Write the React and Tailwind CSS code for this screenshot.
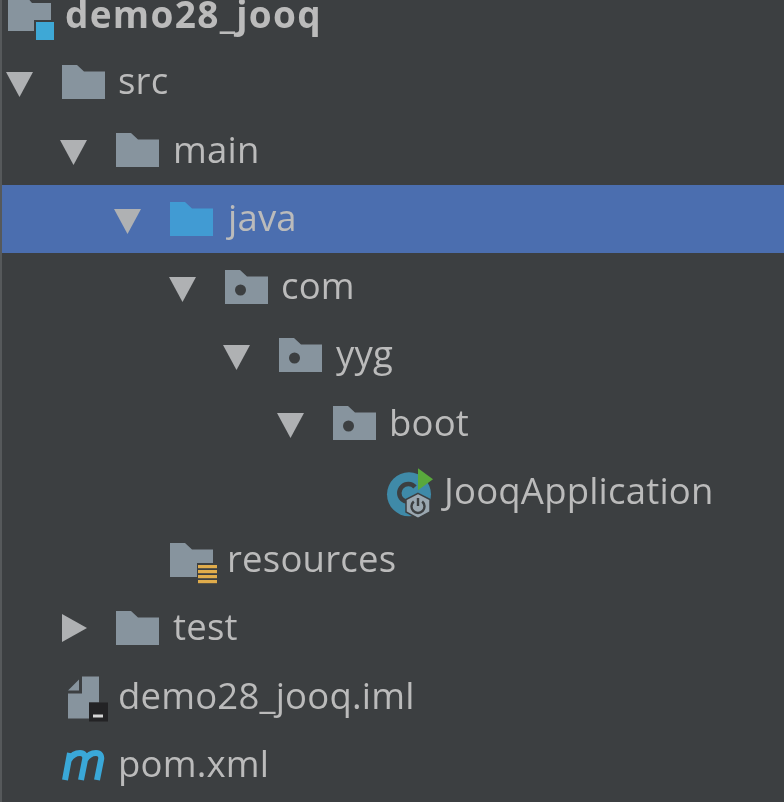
function Arrow({ open = true }) {
  return (
    <svg width="28" height="28" viewBox="0 0 28 28" className="shrink-0 overflow-visible">
      {open ? <path d="M0 4H27L13.5 29Z" fill="#afb1b3" /> : <path d="M0 0V28L25 14Z" fill="#afb1b3" />}
    </svg>
  );
}

function Folder({ color = "#87949e", dot = false, res = false }) {
  return (
    <svg width="48" height="34" viewBox="0 0 48 34" className="shrink-0 overflow-visible">
      <path d={res ? "M0 0H15L22 6.5H43V20H27V34H0Z" : "M0 0H15L22 6.5H43V34H0Z"} fill={color} />
      {dot && <circle cx="15.5" cy="20" r="5.5" fill="#3c3f41" />}
      {res && (
        <g fill="#e0ac4b">
          <rect x="28" y="22" width="19" height="3.2" />
          <rect x="28" y="27" width="19" height="3.2" />
          <rect x="28" y="32" width="19" height="3.2" />
          <rect x="28" y="37" width="19" height="3.2" />
        </g>
      )}
    </svg>
  );
}

function ModuleIcon() {
  return (
    <svg width="48" height="42" viewBox="0 0 48 42" className="shrink-0">
      <path d="M0 -4H18L24 3H43V20H26V31H0Z" fill="#87949e" />
      <rect x="28" y="22" width="18" height="18" fill="#3ea8d6" />
    </svg>
  );
}

function SpringIcon() {
  return (
    <svg width="50" height="52" viewBox="0 0 50 52" className="shrink-0 overflow-visible">
      <circle cx="22" cy="28.3" r="22" fill="#3f8aa8" />
      <path d="M28 21A9 9 0 1 0 28 33" fill="none" stroke="#3c3f41" strokeWidth="4.5" />
      <path d="M31 2.3L46 13.3L31 24.3Z" fill="#59a83c" />
      <path d="M31 27.3L43 33.5V46L31 52.3L19 46V33.5Z" fill="#9aa7b0" stroke="#3c3f41" strokeWidth="1.5" />
      <path d="M26.8 35.5A6.5 6.5 0 1 0 35.2 35.5" fill="none" stroke="#3c3f41" strokeWidth="2.4" />
      <path d="M31 32V40" stroke="#3c3f41" strokeWidth="2.4" />
    </svg>
  );
}

function FileIcon() {
  return (
    <svg width="42" height="46" viewBox="0 -3.5 42 46" className="shrink-0 overflow-visible">
      <path d="M0 14L11 3V14Z" fill="#87949e" />
      <path d="M14 0H31V26H21V42H0V17H14Z" fill="#87949e" />
      <rect x="21" y="26" width="19" height="19" fill="#232325" />
      <rect x="25" y="38" width="10" height="3" fill="#d6d6d6" />
    </svg>
  );
}

function MavenIcon() {
  return (
    <svg width="44" height="34" viewBox="0 0 44 34" className="shrink-0">
      <path
        d="M3 32L8 5M7 12C10 7 14 5 18 5C22 5 24 8 23 12L19 32M23 12C26 7 30 5 34 5C38 5 40 8 39 12L35 32"
        fill="none"
        stroke="#3aa8d8"
        strokeWidth="6"
      />
    </svg>
  );
}

function Label({ children }) {
  return <span className="inline-block mb-[3px] tracking-[0.2px] text-[#bbbbbb]">{children}</span>;
}

export default function App() {
  return (
    <div className="w-[784px] h-[802px] overflow-hidden bg-[#3c3f41] border-l-2 border-[#56595b] text-[36.5px] leading-none [font-family:'Open_Sans','Liberation_Sans',sans-serif] blur-[0.5px]">
      <div className="flex flex-col">
        <div className="h-[48px] flex items-start pl-[6px] gap-[9px]">
          <ModuleIcon />
          <span className="text-[37px] leading-[28px] tracking-[1.3px] font-bold text-[#bbbbbb]">demo28_jooq</span>
        </div>

        <div className="h-[68.25px] flex items-center pl-[4px]">
          <div className="w-[56px]"><Arrow /></div>
          <Folder />
          <div className="ml-[8px]"><Label>src</Label></div>
        </div>
        <div className="h-[68.25px] flex items-center pl-[58px]">
          <div className="w-[56px]"><Arrow /></div>
          <Folder />
          <div className="ml-[9px]"><Label>main</Label></div>
        </div>
        <div className="h-[68.25px] flex items-center pl-[112px] bg-[#4b6eaf]">
          <div className="w-[56px]"><Arrow /></div>
          <Folder color="#419bd3" />
          <div className="ml-[10px]"><Label>java</Label></div>
        </div>
        <div className="h-[68.25px] flex items-center pl-[167px]">
          <div className="w-[56px]"><Arrow /></div>
          <Folder dot />
          <div className="ml-[8px]"><Label>com</Label></div>
        </div>
        <div className="h-[68.25px] flex items-center pl-[221px]">
          <div className="w-[56px]"><Arrow /></div>
          <Folder dot />
          <div className="ml-[9px]"><Label>yyg</Label></div>
        </div>
        <div className="h-[68.25px] flex items-center pl-[275px]">
          <div className="w-[56px]"><Arrow /></div>
          <Folder dot />
          <div className="ml-[8px]"><Label>boot</Label></div>
        </div>
        <div className="h-[68.25px] flex items-center pl-[385px] gap-[7px]">
          <SpringIcon />
          <Label>JooqApplication</Label>
        </div>
        <div className="h-[68.25px] flex items-center pl-[168px]">
          <Folder res />
          <div className="ml-[9px]"><Label>resources</Label></div>
        </div>
        <div className="h-[68.25px] flex items-center pl-[60px]">
          <div className="w-[54px]"><Arrow open={false} /></div>
          <Folder />
          <div className="ml-[9px]"><Label>test</Label></div>
        </div>
        <div className="h-[68.25px] flex items-center pl-[66px] gap-[8px]">
          <FileIcon />
          <Label>demo28_jooq.iml</Label>
        </div>
        <div className="h-[68.25px] flex items-center pl-[60px] gap-[12px]">
          <MavenIcon />
          <Label>pom.xml</Label>
        </div>
      </div>
    </div>
  );
}
